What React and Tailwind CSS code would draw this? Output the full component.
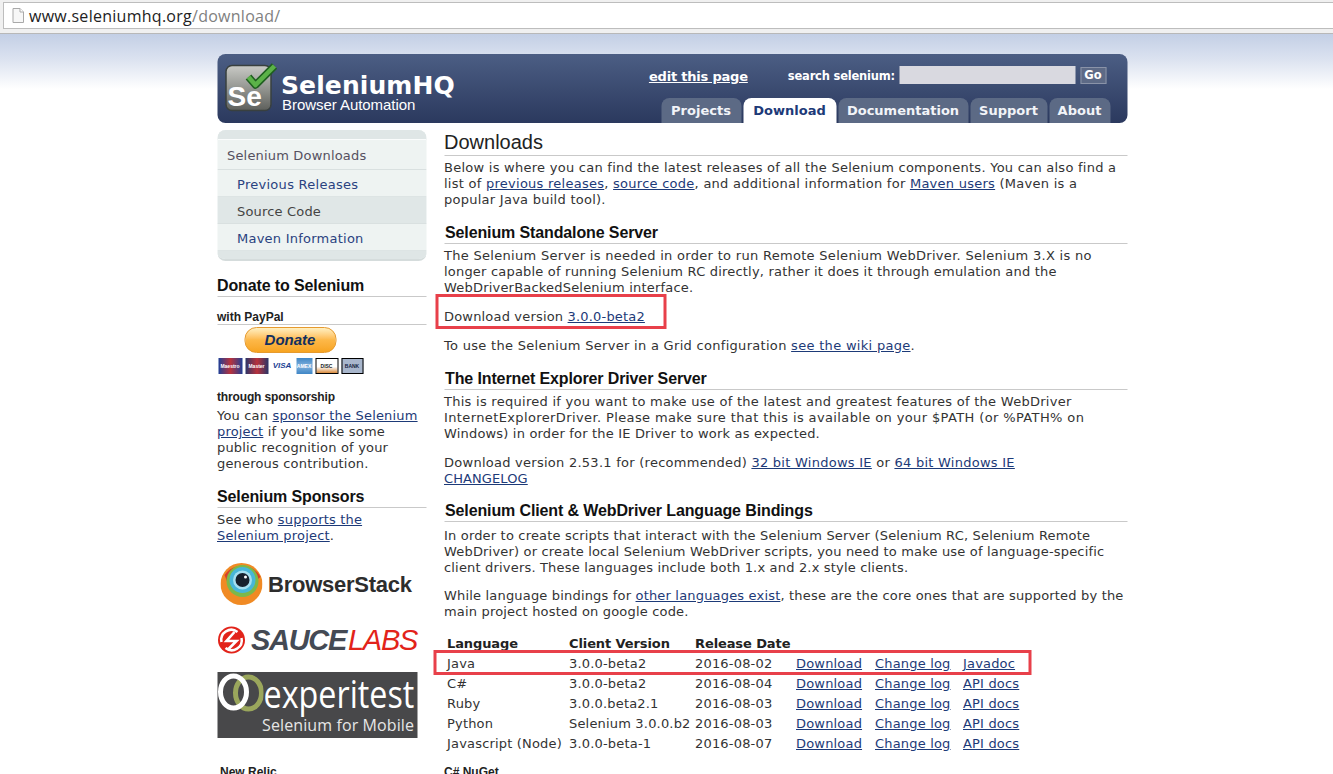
const V = "font-['DejaVu_Sans','Verdana',sans-serif]";
const A = "font-['Liberation_Sans','Arial',sans-serif]";

const L = ({ children }) => <a className="text-[#1d3a78] underline">{children}</a>;

const H3 = ({ children, className = "" }) => (
  <h3 className={`${A} border-b border-[#c9c9c9] text-[16px] font-bold tracking-[-0.12px] text-[#111] ${className}`}>{children}</h3>
);

const P = ({ children, className = "" }) => <p className={`leading-[16px] ${className}`}>{children}</p>;

function SeLogo() {
  return (
    <svg width="54" height="50" viewBox="0 0 54 50" className="shrink-0">
      <defs>
        <linearGradient id="sq" x1="0" y1="0" x2="0" y2="1">
          <stop offset="0" stopColor="#c9cac6" />
          <stop offset="0.55" stopColor="#8f918c" />
          <stop offset="1" stopColor="#5d5f5b" />
        </linearGradient>
      </defs>
      <rect x="1.5" y="2.5" width="45" height="45" rx="6" fill="url(#sq)" stroke="#39403f" strokeWidth="1.5" />
      <path d="M24 14 L31 22 L50 3" fill="none" stroke="#1f5e20" strokeWidth="7.5" strokeLinejoin="round" />
      <path d="M24 14 L31 22 L50 3" fill="none" stroke="#5bb248" strokeWidth="4.5" strokeLinejoin="round" />
      <text x="3" y="43" fontFamily="'Liberation Sans',sans-serif" fontWeight="700" fontSize="28" fill="#fff">Se</text>
    </svg>
  );
}

function Card({ bg, children, fg = "#fff", w = 26, border = "" }) {
  return (
    <span style={{ width: w, background: bg, color: fg }} className={`flex h-[16px] items-center justify-center overflow-hidden text-[5px] font-bold leading-none tracking-normal ${A} ${border}`}>
      {children}
    </span>
  );
}

function Sidebar() {
  return (
    <aside className={`${V} w-[209px] shrink-0 text-[13px] tracking-[0.18px] text-[#333]`}>
      <div className="mt-[7px] overflow-hidden rounded-[8px] border-b-2 border-[#d5dcdc] bg-[#eef3f2]">
        <div className="h-[10px] border-b border-[#fafcfc] bg-[#dfe6e6]" />
        <div className="flex h-[30px] items-center border-b border-[#d9e0e0] pl-[10px] pt-[2px] text-[#555060]">Selenium Downloads</div>
        <div className="flex h-[27px] items-center border-b border-[#dde4e4] pl-[20px] pt-[4px] tracking-[0.28px] text-[#2a4280]">Previous Releases</div>
        <div className="flex h-[27px] items-center border-b border-[#d9e0e0] bg-[#e0e7e7] pl-[20px] pt-[4px] text-[#444]">Source Code</div>
        <div className="flex h-[27px] items-center border-b border-[#dde4e4] pl-[20px] pt-[4px] tracking-[0.24px] text-[#2a4280]">Maven Information</div>
        <div className="h-[8px] bg-[#dfe6e6]" />
      </div>

      <H3 className="mt-[14px] h-[22px] leading-[22px]">Donate to Selenium</H3>
      <div className={`${A} mt-[13px] h-[15px] border-b border-[#c9c9c9] text-[12px] font-bold leading-[14px] tracking-normal text-[#222]`}>with PayPal</div>
      <div className={`${A} ml-[27px] mt-[2px] flex h-[26px] w-[92px] items-center justify-center rounded-[12px] border border-[#e69a2e] bg-gradient-to-b from-[#fff0c0] via-[#fdb848] to-[#f7a41f] text-[15px] font-bold italic tracking-normal text-[#12305f]`}>Donate</div>
      <div className="ml-[1px] mt-[5px] flex items-center gap-[3px]">
        <Card w={24} bg="linear-gradient(90deg,#1f3f96,#b8323c 50%,#1f3f96)">Maestro</Card>
        <Card w={23} bg="linear-gradient(90deg,#2a3568,#b8323c 50%,#2a3568)">Master</Card>
        <Card w={22} bg="#fff" fg="#1b3f94"><span className="text-[8px] italic">VISA</span></Card>
        <Card w={16} bg="linear-gradient(#3f86c6,#7fb0dc 50%,#3f86c6)">AMEX</Card>
        <Card w={23} bg="linear-gradient(#fff 55%,#d98a3c)" fg="#222" border="border border-black">DISC</Card>
        <Card w={22} bg="#a8b6cc" fg="#16233f" border="border border-black">BANK</Card>
      </div>
      <div className={`${A} mt-[16px] h-[14px] text-[12px] font-bold leading-[14px] tracking-[-0.15px] text-[#222]`}>through sponsorship</div>
      <P className="mt-[4px]">You can <L>sponsor the Selenium project</L> if you'd like some public recognition of your generous contribution.</P>
      <H3 className="mt-[13px] h-[23px] leading-[24px]">Selenium Sponsors</H3>
      <P className="mt-[4px]">See who <L>supports the Selenium project</L>.</P>

      {/* BrowserStack */}
      <div className="ml-[3px] mt-[19px] flex h-[42px] items-center gap-[6px]">
        <svg width="42" height="42" viewBox="0 0 42 42" className="shrink-0">
          <circle cx="21" cy="21" r="21" fill="#f08a24" />
          <path d="M4 12 A21 21 0 0 1 40 14 L30 22 L8 22 Z" fill="#d9402a" />
          <circle cx="22" cy="18" r="16" fill="#7cb84a" />
          <circle cx="22" cy="17" r="13" fill="#48b6d8" />
          <circle cx="22" cy="17" r="9.5" fill="#a6dff0" />
          <circle cx="22" cy="17" r="7" fill="#17202c" />
          <circle cx="25" cy="14" r="1.5" fill="#fff" />
        </svg>
        <span className={`${A} pt-[1px] text-[22px] font-bold leading-none tracking-[-0.25px] text-[#2d2d2d]`}>BrowserStack</span>
      </div>

      {/* Sauce Labs */}
      <div className="mt-[20px] flex h-[30px] items-center gap-[6px]">
        <svg width="28" height="28" viewBox="0 0 28 28" className="shrink-0">
          <circle cx="14" cy="14" r="13.5" fill="#e2231a" />
          <path d="M4 16 A10 10 0 0 1 20 6 M24 12 A10 10 0 0 1 8 22" fill="none" stroke="#fff" strokeWidth="2.5" />
          <path d="M17 6 L9 15 H19 L11 23" fill="none" stroke="#fff" strokeWidth="2.6" />
        </svg>
        <span className={`${A} flex text-[29px] italic leading-none tracking-[-1.3px]`}>
          <span className="font-bold text-[#444a54]">SAUCE</span>
          <span className="ml-[2px] text-[#e2231a]">LABS</span>
        </span>
      </div>

      {/* Experitest */}
      <div className="mt-[17px] flex h-[66px] w-[200px] flex-col overflow-hidden bg-[#48484a] text-white">
        <div className="flex h-[43px]">
          <svg width="46" height="42" viewBox="0 0 46 42" className="shrink-0">
            <ellipse cx="31" cy="21" rx="13" ry="16" fill="none" stroke="#9aa65c" strokeWidth="5" />
            <ellipse cx="16" cy="20" rx="13" ry="16" fill="none" stroke="#fff" strokeWidth="5" />
          </svg>
          <span className="origin-left scale-x-[0.85] whitespace-nowrap font-['Open_Sans',sans-serif] text-[38px] leading-[42px] tracking-normal">experitest</span>
        </div>
        <div className="pr-[3px] text-right font-['Open_Sans',sans-serif] text-[16px] leading-[20px] tracking-[0.1px] text-[#e6e6e6]">Selenium for Mobile</div>
      </div>

      <div className={`${A} ml-[3px] mt-[27px] text-[12px] font-bold leading-[14px] tracking-normal text-[#222]`}>New Relic</div>
    </aside>
  );
}

const rows = [
  ["C#", "3.0.0-beta2", "2016-08-04"],
  ["Ruby", "3.0.0.beta2.1", "2016-08-03"],
  ["Python", "Selenium 3.0.0.b2", "2016-08-03"],
  ["Javascript (Node)", "3.0.0-beta-1", "2016-08-07"],
];

function Row({ r, doc }) {
  return (
    <div className="grid h-[20px] grid-cols-[122px_126px_101px_79px_88px_1fr] items-center whitespace-nowrap leading-[16px]">
      <span>{r[0]}</span><span>{r[1]}</span><span>{r[2]}</span>
      <span><L>Download</L></span><span><L>Change log</L></span><span><L>{doc}</L></span>
    </div>
  );
}

function Main() {
  return (
    <main className={`${V} relative w-[683px] shrink-0 text-[13px] tracking-[0.18px] text-[#333]`}>
      <h1 className={`${A} mt-[7px] h-[26px] border-b border-[#c9c9c9] text-[20px] font-normal leading-[25px] tracking-normal text-[#222]`}>Downloads</h1>
      <P className="mt-[4px] tracking-[0.26px]">Below is where you can find the latest releases of all the Selenium components. You can also find a list of <L>previous releases</L>, <L>source code</L>, and additional information for <L>Maven users</L> (Maven is a popular Java build tool).</P>

      <H3 className="mt-[13px] h-[23px] pl-[1px] leading-[24px]">Selenium Standalone Server</H3>
      <P className="mt-[4px] tracking-[0.2px]"><span className="tracking-[0.3px]">The Selenium Server is needed in order to run Remote Selenium WebDriver. Selenium 3.X is no</span> longer capable of running Selenium RC directly, rather it does it through emulation and the WebDriverBackedSelenium interface.</P>
      <P className="mt-[13px]">Download version <L>3.0.0-beta2</L></P>
      <P className="mt-[13px] tracking-[0.3px]">To use the Selenium Server in a Grid configuration <L>see the wiki page</L>.</P>

      <H3 className="mt-[13px] h-[23px] pl-[1px] leading-[24px]">The Internet Explorer Driver Server</H3>
      <P className="mt-[4px]"><span className="tracking-[0.27px]">This is required if you want to make use of the latest and greatest features of the WebDriver</span> <span className="tracking-[0.38px]">InternetExplorerDriver. Please make sure that this is available on your $PATH (or %PATH% on</span> Windows) in order for the IE Driver to work as expected.</P>
      <P className="mt-[13px]"><span className="tracking-[0.26px]">Download version 2.53.1 for (recommended) <L>32 bit Windows IE</L> or <L>64 bit Windows IE</L></span><br /><span className="tracking-[0.1px]"><L>CHANGELOG</L></span></P>

      <H3 className="mt-[12px] h-[23px] pl-[1px] leading-[24px]">Selenium Client &amp; WebDriver Language Bindings</H3>
      <P className="mt-[6px]">In order to create scripts that interact with the Selenium Server (Selenium RC, Selenium Remote WebDriver) or create local Selenium WebDriver scripts, you need to make use of language-specific client drivers. These languages include both 1.x and 2.x style clients.</P>
      <P className="mt-[12px]">While language bindings for <L>other languages exist</L>, these are the core ones that are supported by the main project hosted on google code.</P>

      <div className="ml-[3px] mt-[16px]">
        <div className="grid h-[16px] grid-cols-[122px_126px_101px] items-center whitespace-nowrap font-bold leading-[16px] tracking-[-0.1px] text-[#222]">
          <span>Language</span><span>Client Version</span><span>Release Date</span>
        </div>
        <div className="mt-[2px]" />
        <Row r={["Java", "3.0.0-beta2", "2016-08-02"]} doc="Javadoc" />
        {rows.map((r) => <Row key={r[0]} r={r} doc="API docs" />)}
      </div>
      <div className={`${A} mt-[11px] text-[12px] font-bold leading-[14px] tracking-normal text-[#222]`}>C# NuGet</div>

      {/* highlight annotations */}
      <div className="absolute left-[-9px] top-[171px] h-[35px] w-[231px] border-[3px] border-[#e8404a]" />
      <div className="absolute left-[-11px] top-[527px] h-[25px] w-[598px] border-[3px] border-[#e8404a]" />
    </main>
  );
}

export default function App() {
  return (
    <div className="h-[774px] overflow-hidden bg-white">
      {/* browser address bar */}
      <div className="flex h-[34px] items-start border-b border-[#b8b8b8] bg-[#f0f0f0] pl-[3px] pt-[2px]">
        <div className="flex h-[27px] flex-1 items-center border-y border-l border-[#bdbdbd] bg-white pl-[8px] font-['Open_Sans',sans-serif] text-[16px] tracking-[0.27px]">
          <svg width="12" height="15" viewBox="0 0 12 15" className="shrink-0">
            <path d="M1 .5 H8 L11.5 4 V14.5 H1 Z" fill="#f7f7f7" stroke="#a9a9a9" />
            <path d="M8 .5 V4 H11.5" fill="#fff" stroke="#a9a9a9" />
          </svg>
          <span className="ml-[5px] text-[#222]">www.seleniumhq.org</span>
          <span className="text-[#808080]">/download/</span>
        </div>
      </div>

      <div className="h-[740px] bg-[linear-gradient(#c3cfe5_0px,#dbe2f0_25px,#ffffff_55px)]">
        <div className="mx-auto w-[910px] translate-x-[5.5px] pt-[20px]">
          {/* header */}
          <header className="flex h-[69px] justify-between overflow-hidden rounded-[8px] bg-gradient-to-b from-[#4c5e84] to-[#2b395e]">
            <div className="flex pl-[7px] pt-[9px]">
              <SeLogo />
              <div className="ml-[3px] pt-[10px] text-white">
                <div className={`${V} text-[25px] font-bold leading-[25px] tracking-[0.1px]`}>SeleniumHQ</div>
                <div className={`${A} ml-[1px] mt-[-2px] text-[15px] leading-[17px] tracking-[-0.05px]`}>Browser Automation</div>
              </div>
            </div>
            <div className={`${V} flex flex-col items-end justify-between font-bold`}>
              <div className="flex items-start pr-[21px] pt-[12px]">
                <a className="mr-[40px] mt-[3px] text-[13px] leading-[16px] tracking-[-0.2px] text-white underline">edit this page</a>
                <span className="mt-[2px] text-[11.5px] leading-[16px] tracking-[-0.2px] text-white">search selenium:</span>
                <span className="ml-[4px] h-[18px] w-[176px] bg-[#d9d9e0]" />
                <span className="ml-[5px] mt-[1px] flex h-[17px] w-[26px] items-center justify-center border border-[#8a93a8] bg-[#5d6a86] text-[11.5px] text-white">Go</span>
              </div>
              <nav className="flex gap-[2px] pr-[17px] text-[13px] text-white">
                {[["Projects", 80], ["Download", 93], ["Documentation", 130], ["Support", 77], ["About", 61]].map(([t, w]) => (
                  <span key={t} style={{ width: w }} className={`flex h-[25px] items-center justify-center rounded-t-[8px] ${t === "Download" ? "bg-white text-[#1d3a78]" : "bg-[#5c6a85] text-[#f2f4f8]"}`}>{t}</span>
                ))}
              </nav>
            </div>
          </header>

          <div className="flex gap-[18px]">
            <Sidebar />
            <Main />
          </div>
        </div>
      </div>
    </div>
  );
}
